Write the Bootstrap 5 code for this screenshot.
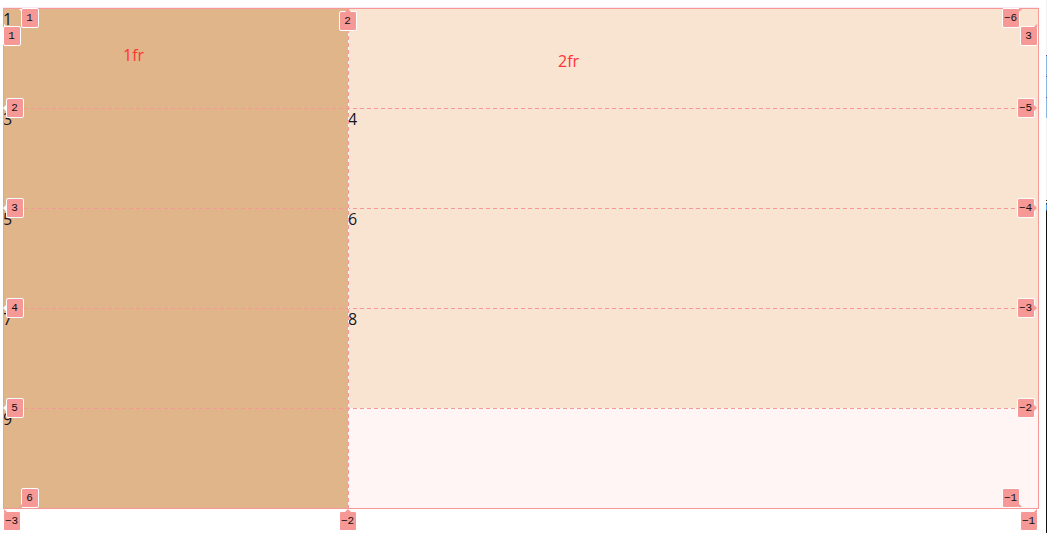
<!DOCTYPE html>
<html lang="en">
<head>
<meta charset="utf-8">
<meta name="viewport" content="width=device-width, initial-scale=1">
<title>Grid 1fr 2fr</title>
<link href="https://cdn.jsdelivr.net/npm/bootstrap@5.3.0/dist/css/bootstrap.min.css" rel="stylesheet">
<style>
body { background: #fff; color: #16161e; font-family: "Open Sans", "Noto Sans", sans-serif; font-size: 16px; line-height: 22px; }
.stage { padding: 8px 7px 24px 3px; }
.fr-grid { display: grid; grid-template-columns: 1fr 2fr; grid-auto-rows: 100px; background: #fff5f4; margin-right: 1px; }
.cell-a { background: #e0b58a; }
.cell-b { background: #f9e4d1; }
/* inspector overlay: outline, track lines, line numbers */
.overlay { position: absolute; inset: 0 -1px -1px 0; border: 1px solid #f69896; box-shadow: 0 -1px 0 #fbe6f5; }
.overlay-box { position: absolute; inset: 0; }
.line-h, .line-v { position: absolute; }
.line-h { left: 0; right: 0; height: 1px; background: repeating-linear-gradient(90deg, #f69896 0 4px, transparent 4px 7px); }
.line-v { top: 0; bottom: 0; left: calc(100% / 3); width: 1px; background: repeating-linear-gradient(#f69896 0 4px, #fff5f4 4px 7px); }
.r2 { top: 20%; } .r3 { top: 40%; } .r4 { top: 60%; } .r5 { top: 80%; }
.tag { position: absolute; width: 18px; height: 20px; padding-right: 1px; border: 1px solid #fff; border-radius: 2px; background: #f69896; color: #111; font: 11px/18px "Liberation Mono", monospace; display: flex; justify-content: center; }
.tag::before { content: ""; position: absolute; background: #f69896; }
.side-l { left: 3px; margin-top: -10px; }
.side-r { right: 3px; margin-top: -10px; }
.side-l::before { left: -4px; top: 5px; width: 4px; height: 8px; background: #fff; clip-path: polygon(0 50%, 100% 0, 100% 100%); }
.side-r::before { right: -3px; top: 6px; width: 3px; height: 6px; clip-path: polygon(100% 50%, 0 0, 0 100%); }
.in-top { top: 0; } .in-bottom { bottom: 0; }
.in-left { left: 18px; } .in-right { right: 18px; }
.edge-l { left: 0; } .edge-r { right: 0; }
.drop { top: 18px; } .below { top: calc(100% + 3px); }
.mid { left: calc(100% / 3); margin-left: -9px; }
.mid-top { top: 3px; }
.mid::before { top: -3px; left: 5px; width: 6px; height: 3px; clip-path: polygon(50% 0, 0 100%, 100% 100%); }
.in-left::before, .in-right::before { width: 3px; height: 3px; }
.in-left::before { left: -3px; }
.in-right::before { right: -3px; }
.in-top.in-left::before { top: 0; background: #fff; clip-path: polygon(0 0, 100% 0, 100% 100%); }
.in-top.in-right::before { top: 0; clip-path: polygon(0 0, 100% 0, 0 100%); }
.in-bottom.in-left::before { bottom: 0; clip-path: polygon(100% 0, 100% 100%, 0 100%); }
.in-bottom.in-right::before { bottom: 0; clip-path: polygon(0 0, 100% 100%, 0 100%); }
.edge-l::before, .edge-r::before { top: -3px; width: 3px; height: 3px; }
.edge-l::before { left: 0; clip-path: polygon(0 0, 100% 100%, 0 100%); }
.edge-l.drop::before { background: #fff; }
.edge-r::before { right: 0; clip-path: polygon(100% 0, 100% 100%, 0 100%); }
.fr-note { position: absolute; color: #ff3434; }
.note-1 { left: 120px; top: 36px; }
.note-2 { left: 210px; top: 42px; }
/* sliver of the neighbouring panel */
.panel-edge { width: 1px; background: linear-gradient(#f3f3f3 0 55px, #6f4bb0 55px 56px, #8fb4e4 56px 76px, #6f4bb0 76px 77px, #8fb4e4 77px 97px, #6f4bb0 97px 98px, #8fb4e4 98px 118px, #f3f3f3 118px 200px, #333 200px 201px, #f3f3f3 201px 203px, #333 203px 204px, #5d9edc 205px 210px, #111 211px); }
</style>
</head>
<body class="d-flex min-vh-100">
<main class="stage flex-grow-1">
  <div class="fr-grid position-relative">
    <div class="cell-a position-relative">1<span class="fr-note note-1">1fr</span></div>
    <div class="cell-b position-relative"><span class="fr-note note-2">2fr</span></div>
    <div class="cell-a">3</div>
    <div class="cell-b">4</div>
    <div class="cell-a">5</div>
    <div class="cell-b">6</div>
    <div class="cell-a">7</div>
    <div class="cell-b">8</div>
    <div class="cell-a">9</div>
    <div class="overlay"></div>
    <div class="overlay-box">
      <i class="line-h r2"></i><i class="line-h r3"></i><i class="line-h r4"></i><i class="line-h r5"></i>
      <i class="line-v"></i>
      <span class="tag in-top in-left">1</span>
      <span class="tag side-l r2">2</span>
      <span class="tag side-l r3">3</span>
      <span class="tag side-l r4">4</span>
      <span class="tag side-l r5">5</span>
      <span class="tag in-bottom in-left">6</span>
      <span class="tag in-top in-right">−6</span>
      <span class="tag side-r r2">−5</span>
      <span class="tag side-r r3">−4</span>
      <span class="tag side-r r4">−3</span>
      <span class="tag side-r r5">−2</span>
      <span class="tag in-bottom in-right">−1</span>
      <span class="tag edge-l drop">1</span>
      <span class="tag mid mid-top">2</span>
      <span class="tag edge-r drop">3</span>
      <span class="tag edge-l below">−3</span>
      <span class="tag mid below">−2</span>
      <span class="tag edge-r below">−1</span>
    </div>
  </div>
</main>
<aside class="panel-edge flex-shrink-0"></aside>
<script src="https://cdn.jsdelivr.net/npm/bootstrap@5.3.0/dist/js/bootstrap.bundle.min.js"></script>
</body>
</html>
